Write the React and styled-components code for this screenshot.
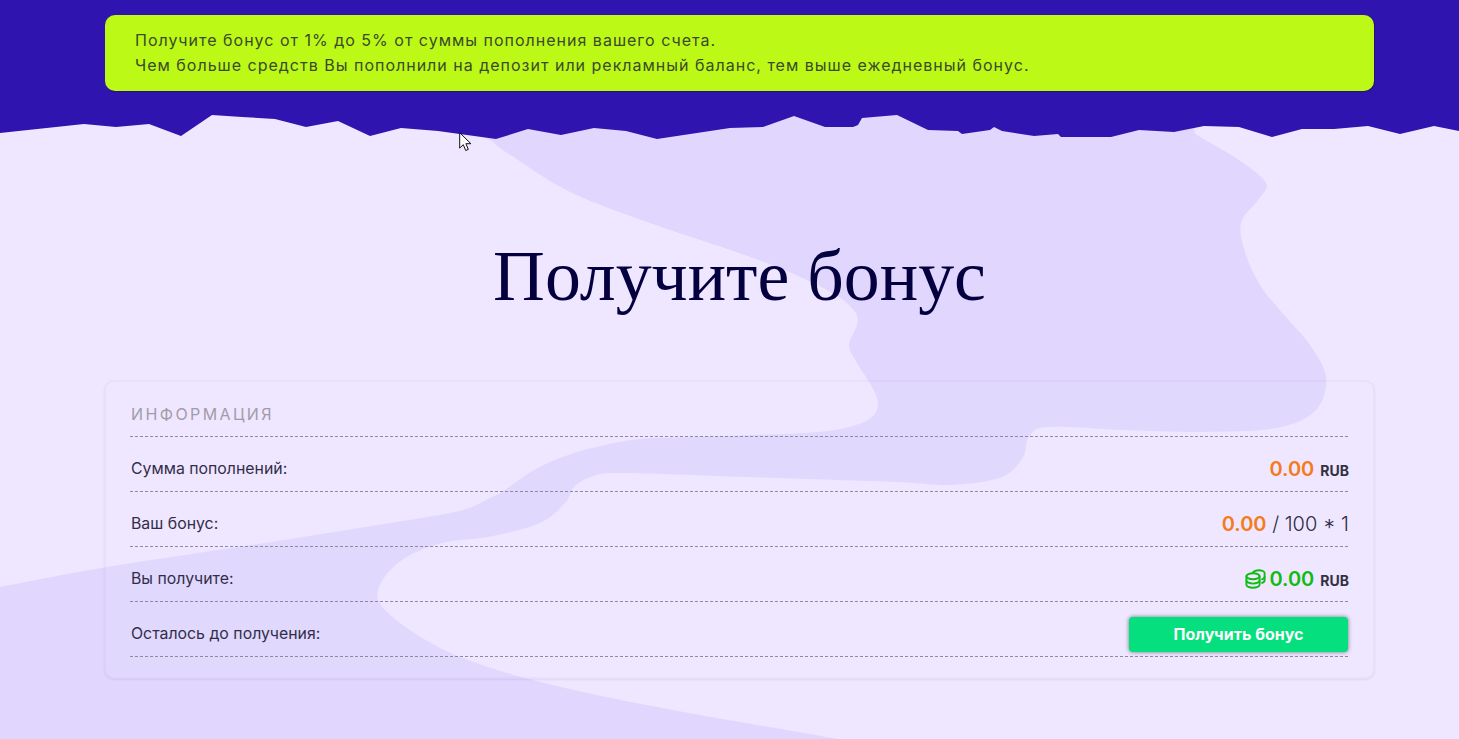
import React from "react";
import styled, { createGlobalStyle } from "styled-components";

const GlobalStyle = createGlobalStyle`
  html, body {
    margin: 0;
    padding: 0;
    background: #efe7ff;
  }
`;

const Page = styled.div`
  position: relative;
  width: 1459px;
  height: 739px;
  overflow: hidden;
  background: #efe7ff;
  font-family: Inter, "Noto Sans", sans-serif;
`;

const BlobLayer = styled.svg`
  position: absolute;
  left: 0;
  top: 0;
  width: 1459px;
  height: 739px;
`;

const TopBand = styled.section`
  position: relative;
  background: #2f14af;
  padding: 15px 85px 19px 105px;
`;

const Notice = styled.div`
  height: 76px;
  box-sizing: border-box;
  padding: 13px 30px;
  border-radius: 10px;
  background: #bcf916;
  box-shadow: 1px 1px 1px rgba(20, 20, 20, 0.35);
  color: #3a4a2a;
  font-size: 16px;
  line-height: 24.5px;
  letter-spacing: 1px;
`;

const TornEdge = styled.svg`
  position: relative;
  display: block;
  width: 1459px;
  height: 30px;
`;

const Content = styled.main`
  position: relative;
  width: 1271px;
  margin-left: 104px;
`;

const Title = styled.h1`
  margin: 95px 0 0;
  text-align: center;
  font-family: "Liberation Serif", "Times New Roman", serif;
  font-size: 71.8px;
  font-weight: 400;
  line-height: 83px;
  color: #04003f;
`;

const Panel = styled.section`
  margin-top: 62px;
  box-sizing: border-box;
  height: 299px;
  padding: 0 25px;
  border: 2px solid rgba(90, 70, 170, 0.05);
  border-radius: 10px;
  background: rgba(255, 255, 255, 0.03);
  box-shadow: 0 1px 2px rgba(70, 50, 150, 0.1);
`;

const PanelTitle = styled.div`
  height: 55px;
  box-sizing: border-box;
  padding: 22px 0 0 1px;
  margin-left: -1px;
  border-bottom: 1px dashed #8f8999;
  color: #a19ca9;
  font-size: 16px;
  line-height: 20px;
  letter-spacing: 2.4px;
`;

const Row = styled.div`
  height: 55px;
  box-sizing: border-box;
  display: flex;
  align-items: center;
  justify-content: space-between;
  margin-left: -1px;
  padding: 9px 0 0 1px;
  border-bottom: 1px dashed #8f8999;
  color: #322e4a;
  font-size: 15.85px;
`;

const Value = styled.div`
  display: flex;
  align-items: baseline;
  gap: 6px;
  margin-right: -1px;
  font-size: 20px;
  font-weight: 300;
  color: #2c2945;
`;

const Amount = styled.b`
  font-weight: 600;
  font-size: 20px;
  color: ${(props) => (props.$green ? "#10bb12" : "#f47b1c")};
`;

const Currency = styled.b`
  font-size: 14px;
  font-weight: 700;
  color: #33313f;
`;

const CoinsIcon = styled.svg`
  width: 21px;
  height: 20px;
  align-self: center;
  margin-right: -3px;
`;

const BonusButton = styled.button`
  width: 219px;
  height: 35px;
  margin-top: 1px;
  border: none;
  border-radius: 4px;
  background: #05df7e;
  box-shadow: 0 0 4px rgba(30, 60, 60, 0.65);
  color: #ffffff;
  font-family: inherit;
  font-size: 16px;
  font-weight: 700;
  cursor: pointer;
`;

const Cursor = styled.svg`
  position: absolute;
  left: 459px;
  top: 132px;
  width: 13px;
  height: 20px;
`;

const TORN_POINTS =
  "0,0 0,23 84,14 116,17 149,14 181,26 212,5 242,7 275,9 306,17 338,11 370,26 401,18 438,21 496,29 528,19 561,25 594,18 626,21 657,29 730,18 763,17 794,6 825,17 853,17 858,15 862,8 897,5 928,20 958,21 962,24 990,20 994,17 1002,21 1034,26 1058,24 1061,27 1111,27 1139,20 1174,22 1204,16 1239,17 1272,27 1302,19 1334,19 1368,16 1400,24 1434,16 1459,21 1459,0";

const BLOB_POINTS = [
  [480, 120], [800, 100], [1160, 110], [1197, 135], [1239, 160], [1266, 183], [1258, 200],
  [1241, 223], [1246, 255], [1262, 288], [1285, 316], [1310, 345], [1326, 377], [1316, 410], [1277, 428],
  [1201, 432], [1124, 430], [1048, 427], [1029, 437], [1023, 457], [1002, 477], [952, 485],
  [895, 482], [746, 477], [620, 473], [591, 477], [574, 487], [565, 503], [540, 523],
  [488, 537], [442, 543], [402, 560], [379, 587], [385, 610], [431, 643], [488, 667],
  [574, 690], [689, 713], [832, 738], [900, 752], [900, 800], [-40, 800], [-40, 595],
  [0, 587], [107, 567], [264, 543], [390, 523], [459, 511], [488, 499], [505, 490], [534, 470],
  [574, 453], [631, 440], [689, 437], [804, 433], [849, 427], [872, 417], [878, 403],
  [872, 387], [857, 363], [849, 345], [857, 325], [855, 312], [836, 295], [789, 272],
  [736, 252], [664, 228], [593, 202], [557, 185], [521, 162], [493, 142],
];

// closed catmull-rom through the traced outline
const smoothPath = (pts) => {
  const n = pts.length;
  let d = `M${pts[0][0]} ${pts[0][1]}`;
  for (let i = 0; i < n; i++) {
    const p0 = pts[(i - 1 + n) % n];
    const p1 = pts[i];
    const p2 = pts[(i + 1) % n];
    const p3 = pts[(i + 2) % n];
    const c1x = p1[0] + (p2[0] - p0[0]) / 6;
    const c1y = p1[1] + (p2[1] - p0[1]) / 6;
    const c2x = p2[0] - (p3[0] - p1[0]) / 6;
    const c2y = p2[1] - (p3[1] - p1[1]) / 6;
    d += `C${c1x.toFixed(1)} ${c1y.toFixed(1)} ${c2x.toFixed(1)} ${c2y.toFixed(1)} ${p2[0]} ${p2[1]}`;
  }
  return d + "Z";
};

const Coins = () => (
  <CoinsIcon viewBox="0 0 21 20" fill="none" stroke="#10bb12" strokeWidth="1.9" strokeLinecap="round">
    <path d="M8 3.4c1-1.3 3.2-2.2 5.8-2.2 3.2 0 5.8 1.3 5.8 2.9v7.4c0 1-1 1.9-2.6 2.4" />
    <path d="M19.6 8c0 .9-1 1.8-2.6 2.3" />
    <ellipse cx="8" cy="7.2" rx="6.6" ry="3" />
    <path d="M1.4 7.2v8.6c0 1.7 3 3 6.6 3s6.6-1.3 6.6-3V7.2" />
    <path d="M1.4 11.6c0 1.6 3 3 6.6 3s6.6-1.4 6.6-3" />
  </CoinsIcon>
);

const App = () => {
  return (
    <Page>
      <GlobalStyle />
      <BlobLayer viewBox="0 0 1459 739">
        <path d={smoothPath(BLOB_POINTS)} fill="#e1d7fe" />
      </BlobLayer>
      <TopBand>
        <Notice>
          Получите бонус от 1% до 5% от суммы пополнения вашего счета.
          <br />
          Чем больше средств Вы пополнили на депозит или рекламный баланс, тем выше ежедневный бонус.
        </Notice>
      </TopBand>
      <TornEdge viewBox="0 0 1459 30">
        <polygon points={TORN_POINTS} fill="#2f14af" />
      </TornEdge>
      <Content>
        <Title>Получите бонус</Title>
        <Panel>
          <PanelTitle>ИНФОРМАЦИЯ</PanelTitle>
          <Row>
            <span>Сумма пополнений:</span>
            <Value>
              <Amount>0.00</Amount>
              <Currency>RUB</Currency>
            </Value>
          </Row>
          <Row>
            <span>Ваш бонус:</span>
            <Value>
              <span>
                <Amount>0.00</Amount> / 100 * 1
              </span>
            </Value>
          </Row>
          <Row>
            <span>Вы получите:</span>
            <Value>
              <Coins />
              <Amount $green>0.00</Amount>
              <Currency>RUB</Currency>
            </Value>
          </Row>
          <Row>
            <span>Осталось до получения:</span>
            <BonusButton>Получить бонус</BonusButton>
          </Row>
        </Panel>
      </Content>
      <Cursor viewBox="0 0 13 20">
        <path d="M.7.7v15.4l3.6-3.4 2.4 5.8 2.6-1.1-2.4-5.7h5z" fill="#fff" stroke="#111" strokeWidth="1" />
      </Cursor>
    </Page>
  );
};

export default App;
